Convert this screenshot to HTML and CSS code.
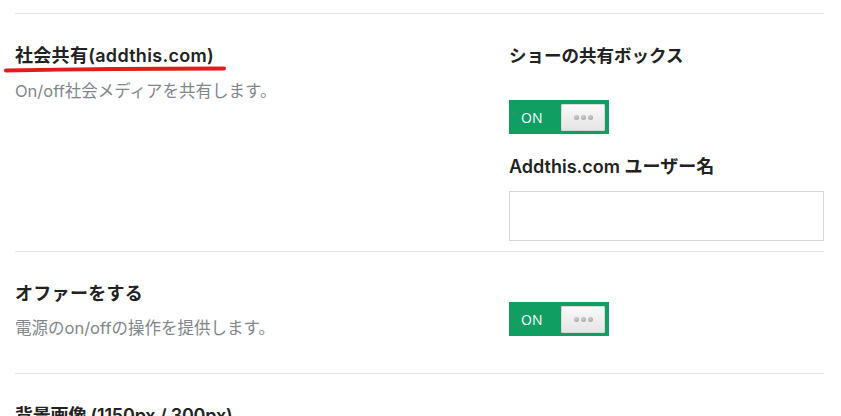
FILE: index.html
```html
<!DOCTYPE html>
<html lang="ja">

<head>
    <meta charset="UTF-8">
    <title>設定</title>
    <link rel="stylesheet" href="styles.css">
</head>

<body>
    <div class="settings">
        <div class="row row-share">
            <div class="info">
                <h3 class="title marked">
                    社会共有(addthis.com)
                    <svg class="scribble" width="230" height="10" viewBox="0 0 230 10">
                        <path d="M4 6.5 Q110 4.5 222 4.5" />
                    </svg>
                </h3>
                <p class="desc">On/off社会メディアを共有します。</p>
            </div>
            <div class="fields">
                <h4 class="label">ショーの共有ボックス</h4>
                <div class="toggle toggle-first">
                    <span class="toggle-text">ON</span>
                    <span class="knob"><i></i><i></i><i></i></span>
                </div>
                <h4 class="label label-user">Addthis.com ユーザー名</h4>
                <input class="text-input" type="text">
            </div>
        </div>
        <div class="row row-offer">
            <div class="info">
                <h3 class="title">オファーをする</h3>
                <p class="desc desc-offer">電源のon/offの操作を提供します。</p>
            </div>
            <div class="fields">
                <div class="toggle toggle-offer">
                    <span class="toggle-text">ON</span>
                    <span class="knob"><i></i><i></i><i></i></span>
                </div>
            </div>
        </div>
        <div class="row row-bg">
            <div class="info">
                <h3 class="title title-tight">背景画像 (1150px / 300px)</h3>
            </div>
        </div>
    </div>
</body>

</html>
```

FILE: styles.css
```css
body {
    margin: 0;
    background: #fff;
    font-family: Inter, "Noto Sans CJK JP", sans-serif;
    color: #222;
}

h3,
h4,
p {
    margin: 0;
}

.settings {
    padding: 13px 17px 0 15px;
}

.row {
    display: grid;
    grid-template-columns: 494px 1fr;
    border-top: 1px solid #e4e4e4;
    padding-top: 30px;
}

.row-share {
    padding-bottom: 10px;
}

.row-offer {
    padding-bottom: 34px;
}

.title {
    position: relative;
    font-size: 18px;
    line-height: 24px;
    font-weight: 600;
    letter-spacing: 0.3px;
    color: #222;
}

.title-tight {
    letter-spacing: -0.2px;
}

.scribble {
    position: absolute;
    left: -13px;
    top: 20px;
}

.scribble path {
    fill: none;
    stroke: #e21b1b;
    stroke-width: 4;
    stroke-linecap: round;
}

.desc {
    margin-top: 12px;
    font-size: 16.5px;
    line-height: 22px;
    color: #80868c;
}

.desc-offer {
    margin-top: 11px;
}

.label {
    font-size: 17.5px;
    line-height: 24px;
    font-weight: 700;
    color: #222;
}

.label-user {
    margin-top: 21px;
    font-size: 18px;
    font-weight: 600;
}

.toggle {
    display: flex;
    align-items: center;
    justify-content: space-between;
    width: 100px;
    height: 34px;
    padding: 0 4px 0 12px;
    box-sizing: border-box;
    background: #109e62;
}

.toggle-first {
    margin-top: 32px;
}

.toggle-offer {
    margin-top: 20px;
}

.toggle-text {
    color: #fff;
    font-family: "Open Sans", sans-serif;
    font-size: 14px;
}

.knob {
    display: flex;
    align-items: center;
    justify-content: center;
    gap: 2px;
    width: 44px;
    height: 27px;
    border-radius: 2px;
    background: linear-gradient(#fafafa, #e4e4e4);
    box-shadow: inset 0 0 0 1px #d8d8d8;
}

.knob i {
    width: 5px;
    height: 5px;
    border-radius: 50%;
    background: radial-gradient(circle at 40% 35%, #d0d0d0, #9a9a9a);
}

.text-input {
    display: block;
    width: 315px;
    height: 50px;
    margin-top: 12px;
    box-sizing: border-box;
    border: 1px solid #d3d6da;
    border-radius: 0;
    outline: none;
}
```
